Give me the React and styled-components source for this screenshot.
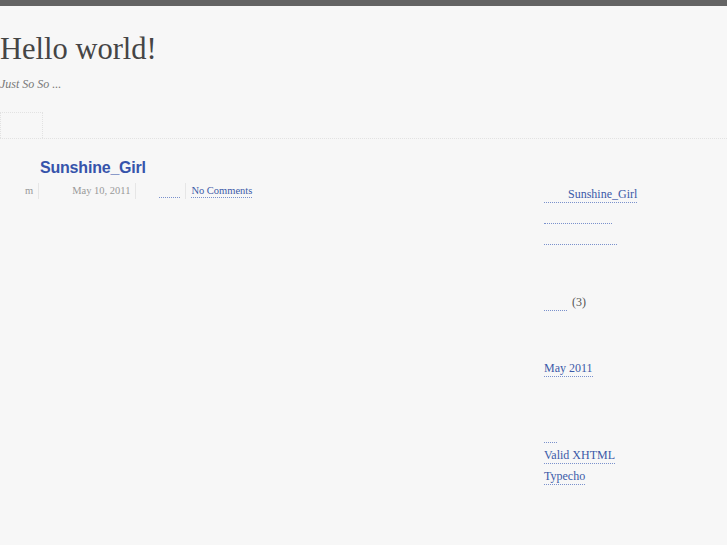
import React from "react";
import styled, { createGlobalStyle } from "styled-components";

const Global = createGlobalStyle`
  html, body { margin: 0; padding: 0; }
  body {
    background: #f7f7f7;
    font-family: "Liberation Serif", "Times New Roman", serif;
    color: #444;
  }
`;

const Page = styled.div`
  min-height: 545px;
`;

const TopBar = styled.div`
  height: 6px;
  background: #646464;
`;

const Header = styled.header`
  padding: 25px 0 0;
`;

const SiteTitle = styled.h1`
  margin: 0;
  font-size: 30.5px;
  line-height: 36px;
  font-weight: normal;
  color: #454545;
`;

const Description = styled.p`
  margin: 9px 0 0;
  font-size: 12px;
  line-height: 16px;
  font-style: italic;
  color: #777;
`;

const NavBar = styled.nav`
  margin-top: 20px;
  display: flex;
  border-bottom: 1px dotted #e2e2e2;
`;

const NavItem = styled.div`
  width: 43px;
  height: 26px;
  border: 1px dotted #e2e2e2;
  border-bottom: none;
  box-sizing: border-box;
`;

const Content = styled.div`
  display: flex;
`;

const Main = styled.main`
  flex: 1;
  padding-top: 19px;
`;

const PostTitle = styled.h2`
  margin: 0 0 0 40px;
  font-family: "Liberation Sans", Arial, sans-serif;
  font-size: 16px;
  line-height: 20px;
  font-weight: bold;
  color: #3654ab;
  letter-spacing: -0.2px;
`;

const Meta = styled.ul`
  list-style: none;
  margin: 5px 0 0;
  padding: 0;
  display: flex;
  font-size: 10.5px;
  line-height: 16px;
  color: #999;
`;

const MetaItem = styled.li`
  padding: 0 5px;
  border-left: 1px solid #e6e6e6;
  &:first-child {
    padding-left: 0;
    border-left: none;
  }
`;

const Blank = styled.span`
  display: inline-block;
  width: ${(p) => p.$w}px;
`;

const Link = styled.a`
  color: #3b5aa8;
  text-decoration: none;
  padding-bottom: 1px;
  border-bottom: 1px dotted #7a91cc;
`;

const Sidebar = styled.aside`
  width: 183px;
  padding-top: 45px;
  font-size: 12px;
  line-height: 21px;
`;

const Section = styled.section`
  & + & {
    margin-top: 45px;
  }
`;

const List = styled.ul`
  list-style: none;
  margin: 0;
  padding: 0;
`;

const Item = styled.li`
  height: 21px;
  color: #555;
`;

const Count = styled.span`
  color: #555;
  margin-left: 5px;
`;

const Gap = ({ w }) => <Blank $w={w}>{"\u00a0"}</Blank>;

export default function App() {
  return (
    <Page>
      <Global />
      <TopBar />
      <Header>
        <SiteTitle>Hello world!</SiteTitle>
        <Description>Just So So ...</Description>
        <NavBar>
          <NavItem />
        </NavBar>
      </Header>
      <Content>
        <Main>
          <PostTitle>Sunshine_Girl</PostTitle>
          <Meta>
            <MetaItem>
              <Gap w={25} />m
            </MetaItem>
            <MetaItem>
              <Gap w={28} />May 10, 2011
            </MetaItem>
            <MetaItem>
              <Gap w={18} />
              <Link href="#">
                <Gap w={21} />
              </Link>
            </MetaItem>
            <MetaItem>
              <Link href="#">No Comments</Link>
            </MetaItem>
          </Meta>
        </Main>
        <Sidebar>
          <Section>
            <List>
              <Item>
                <Link href="#">
                  <Gap w={24} />Sunshine_Girl
                </Link>
              </Item>
              <Item>
                <Link href="#">
                  <Gap w={68} />
                </Link>
              </Item>
              <Item>
                <Link href="#">
                  <Gap w={73} />
                </Link>
              </Item>
            </List>
          </Section>
          <Section>
            <List>
              <Item>
                <Link href="#">
                  <Gap w={23} />
                </Link>
                <Count>(3)</Count>
              </Item>
            </List>
          </Section>
          <Section>
            <List>
              <Item>
                <Link href="#">May 2011</Link>
              </Item>
            </List>
          </Section>
          <Section>
            <List>
              <Item>
                <Link href="#">
                  <Gap w={13} />
                </Link>
              </Item>
              <Item>
                <Link href="#">Valid XHTML</Link>
              </Item>
              <Item>
                <Link href="#">Typecho</Link>
              </Item>
            </List>
          </Section>
        </Sidebar>
      </Content>
    </Page>
  );
}
